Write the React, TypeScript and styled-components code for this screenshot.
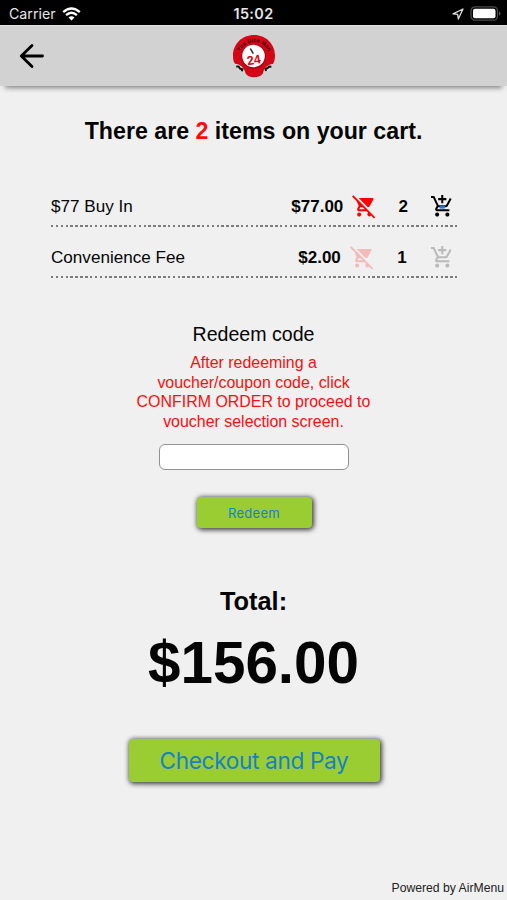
import React from 'react';
import styled, { createGlobalStyle } from 'styled-components';
import { MdAddShoppingCart, MdRemoveShoppingCart } from 'react-icons/md';

const GlobalStyle = createGlobalStyle`
  * { box-sizing: border-box; }
  body { margin: 0; background: #f0f0f0; }
`;

const Screen = styled.div`
  display: flex;
  flex-direction: column;
  width: 507px;
  height: 900px;
  overflow: hidden;
  background: #f0f0f0;
  color: #050505;
  font-family: 'Liberation Sans', Arial, sans-serif;
`;

const StatusBar = styled.div`
  display: grid;
  grid-template-columns: 1fr auto 1fr;
  align-items: center;
  flex: none;
  height: 25px;
  padding: 2px 6px 0 9px;
  background: #000;
  color: #e6e6e6;
  font: 400 14.2px/20px Inter, sans-serif;
`;

const StatusGroup = styled.div<{ $end?: boolean }>`
  display: flex;
  align-items: center;
  justify-content: ${(p) => (p.$end ? 'flex-end' : 'flex-start')};
  gap: 6px;
`;

const Clock = styled.div`
  margin-right: 3px;
  font-weight: 600;
  font-size: 14.4px;
  letter-spacing: 0.35px;
`;

const Header = styled.header`
  display: grid;
  grid-template-columns: 1fr auto 1fr;
  align-items: center;
  flex: none;
  height: 61px;
  padding: 0 18px;
  background: #d2d2d2;
  border-top: 1px solid #e2e2e2;
  box-shadow: 0 7px 5px -5px rgba(0, 0, 0, 0.45);
`;

const BackButton = styled.button`
  display: flex;
  width: 28px;
  padding: 0;
  border: 0;
  background: none;
`;

const Heading = styled.h1`
  margin: 31px 0 0;
  font-size: 23.2px;
  line-height: 28px;
  text-align: center;
`;

const Count = styled.span`
  color: #fb0d0d;
`;

const CartList = styled.div`
  width: 406px;
  margin: 31px 0 0 51px;
`;

const CartRow = styled.div`
  display: flex;
  flex-direction: column;
  justify-content: flex-end;
  height: 51px;
`;

const CartLine = styled.div`
  display: flex;
  align-items: center;
  height: 25px;
  padding-right: 2.7px;
  font-size: 17.1px;
  line-height: 24px;
`;

const DottedRule = styled.div`
  height: 2px;
  margin: 6px 0 0;
  background: repeating-linear-gradient(90deg, #7c7c7c 0 2.5px, transparent 2.5px 4.87px);
`;

const ItemName = styled.span`
  flex: 1;
`;

const Price = styled.strong`
  font-size: 17px;
`;

const Quantity = styled.strong<{ $width: number }>`
  width: ${(p) => p.$width}px;
  font-size: 17px;
  text-align: center;
`;

const CartIcon = styled.span<{ $color: string; $faded: boolean; $gap?: number }>`
  display: flex;
  margin-left: ${(p) => p.$gap ?? 0}px;
  color: ${(p) => p.$color};
  opacity: ${(p) => (p.$faded ? 0.22 : 1)};
`;

const RedeemForm = styled.section`
  display: flex;
  flex-direction: column;
  align-items: center;
  margin-top: 44px;
`;

const FormTitle = styled.h2`
  margin: 0;
  font-size: 19.6px;
  font-weight: 400;
  line-height: 24px;
`;

const Notice = styled.p`
  width: 244px;
  margin: 7px 0 13px;
  color: #fb0d0d;
  font-size: 15.95px;
  line-height: 19.5px;
  text-align: center;
`;

const CodeInput = styled.input`
  width: 190px;
  height: 26px;
  border: 1px solid #929292;
  border-radius: 6px;
  background: #fff;
`;

const ActionButton = styled.button<{ $large?: boolean }>`
  flex: none;
  width: ${(p) => (p.$large ? 251 : 115)}px;
  height: ${(p) => (p.$large ? 43 : 31)}px;
  margin-left: 1px;
  padding: 0;
  border: 0;
  border-radius: 4px;
  background: #9acd32;
  box-shadow: 1px 1px 5px 1px rgba(0, 0, 0, 0.75);
  color: #1581c9;
  font-family: Inter, sans-serif;
  font-size: ${(p) => (p.$large ? 22.6 : 13)}px;
  letter-spacing: ${(p) => (p.$large ? -0.33 : 0.25)}px;
`;

const RedeemSlot = styled.div`
  display: flex;
  margin-top: 27px;
`;

const Summary = styled.section`
  display: flex;
  flex-direction: column;
  align-items: center;
  margin-top: 58px;
`;

const TotalLabel = styled.h2`
  margin: 0;
  font-size: 25.4px;
  line-height: 30px;
`;

const TotalAmount = styled.div`
  margin: 14px 0 43px;
  font-size: 58.4px;
  font-weight: 700;
  line-height: 66px;
`;

const Footer = styled.footer`
  margin-top: auto;
  padding: 0 3px 4px;
  color: #222;
  font-size: 12.2px;
  line-height: 15px;
  text-align: right;
`;

const WifiIcon = () => (
  <svg width="19" height="14" viewBox="0 0 19 14">
    <g fill="none" stroke="#fff" strokeWidth="2.4">
      <path d="M1.2 5.1Q9.5-2 17.8 5.1" />
      <path d="M4.1 8.1Q9.5 3.4 14.9 8.1" />
    </g>
    <path d="M6.5 10.5Q9.5 8 12.5 10.5L9.5 13.6Z" fill="#fff" />
  </svg>
);

const LocationIcon = () => (
  <svg width="12" height="12" viewBox="0 0 12 12">
    <path d="M11 1 1 5.8 5.7 6.4 6.3 11Z" fill="none" stroke="#ddd" strokeWidth="1.3" strokeLinejoin="round" />
  </svg>
);

const BatteryIcon = () => (
  <svg width="31" height="15" viewBox="0 0 31 15">
    <rect x="1" y="0.8" width="26.5" height="13.4" rx="4" fill="none" stroke="#4b4b4b" strokeWidth="1.3" />
    <rect x="3" y="2.8" width="22.5" height="9.4" rx="2" fill="#fff" />
    <path d="M29 5.2q3 2.3 0 4.6Z" fill="#5a5a5a" />
  </svg>
);

const BackArrow = () => (
  <svg width="28" height="28" viewBox="0 0 28 28">
    <path
      d="M24.5 14H3.5M14 3.5 3.3 14 14 24.5"
      fill="none"
      stroke="#000"
      strokeWidth="2.8"
      strokeLinecap="round"
      strokeLinejoin="round"
    />
  </svg>
);

const Logo = () => (
  <svg width="44" height="44" viewBox="0 0 44 44">
    <defs>
      <path id="logoArc" d="M8.4 17.5A14.8 14.8 0 0 1 36 17.5" />
    </defs>
    <path d="M3 30C8 29.500 12 32 13.500 37L7 37ZM41 30C36 29.500 32 32 30.500 37L37 37Z" fill="#dedcdc" />
    <path
      d="M22 1C10 1 1 10 1 21.5c0 4 .6 6.5 2 8.3 5 .2 9.4 4 10.5 9.5C15 42 18 43.200 22 43.200s7.5-1.2 9-4c1-5.4 5-9 10-9.3 1.4-2 2-4.7 2-8.4C43 10 34 1 22 1Z"
      fill="#d30718"
    />
    <circle cx="21.7" cy="22.5" r="12.2" fill="#9f0715" />
    <circle cx="21.5" cy="22" r="11.3" fill="#fff" />
    <text fill="#350208" fontFamily="Liberation Sans, sans-serif" fontSize="5.5" fontWeight="700">
      <textPath href="#logoArc" startOffset="50%" textAnchor="middle">The Dice Man</textPath>
    </text>
    <path d="m18.3 14.5 3 5.2" stroke="#222" strokeWidth="1.5" />
    <text
      x="21.8"
      y="30.2"
      textAnchor="middle"
      transform="rotate(-10 22 26)"
      fill="#d30718"
      fontFamily="Liberation Sans, sans-serif"
      fontSize="12.5"
      fontWeight="700"
    >
      24
    </text>
    <path
      d="m4.2 32.5 2.400 0 1.400 2 2.400.8-.6 2M34 37l-.3-2 2-1 1.5-1.500 2.200.2"
      stroke="#0b1711"
      strokeWidth="2.1"
      fill="none"
    />
  </svg>
);

const AddCart = ({ accent }: { accent: boolean }) => (
  <svg width="24.5" height="24.5" viewBox="0 0 24 24">
    <MdAddShoppingCart size={24} />
    {accent && <path d="M9.5 11.5h5v2.8h-5Z" fill="#1976ed" />}
  </svg>
);

const items = [
  { name: '$77 Buy In', price: '$77.00', quantity: 2, fixed: false, quantityWidth: 53 },
  { name: 'Convenience Fee', price: '$2.00', quantity: 1, fixed: true, quantityWidth: 55.5 },
];

export default function App() {
  return (
    <Screen>
      <GlobalStyle />
      <StatusBar>
        <StatusGroup>
          Carrier
          <WifiIcon />
        </StatusGroup>
        <Clock>15:02</Clock>
        <StatusGroup $end>
          <LocationIcon />
          <BatteryIcon />
        </StatusGroup>
      </StatusBar>
      <Header>
        <BackButton aria-label="Back">
          <BackArrow />
        </BackButton>
        <Logo />
      </Header>
      <Heading>
        There are <Count>2</Count> items on your cart.
      </Heading>
      <CartList>
        {items.map((item) => (
          <CartRow key={item.name}>
            <CartLine>
              <ItemName>{item.name}</ItemName>
              <Price>{item.price}</Price>
              <CartIcon $color="#ff0000" $faded={item.fixed} $gap={9}>
                <MdRemoveShoppingCart size={24.5} />
              </CartIcon>
              <Quantity $width={item.quantityWidth}>{item.quantity}</Quantity>
              <CartIcon $color="#000" $faded={item.fixed}>
                <AddCart accent={!item.fixed} />
              </CartIcon>
            </CartLine>
            <DottedRule />
          </CartRow>
        ))}
      </CartList>
      <RedeemForm>
        <FormTitle>Redeem code</FormTitle>
        <Notice>
          After redeeming a<br />
          voucher/coupon code, click<br />
          CONFIRM ORDER to proceed to<br />
          voucher selection screen.
        </Notice>
        <CodeInput aria-label="Redeem code" />
        <RedeemSlot>
          <ActionButton>Redeem</ActionButton>
        </RedeemSlot>
      </RedeemForm>
      <Summary>
        <TotalLabel>Total:</TotalLabel>
        <TotalAmount>$156.00</TotalAmount>
        <ActionButton $large>Checkout and Pay</ActionButton>
      </Summary>
      <Footer>Powered by AirMenu</Footer>
    </Screen>
  );
}
